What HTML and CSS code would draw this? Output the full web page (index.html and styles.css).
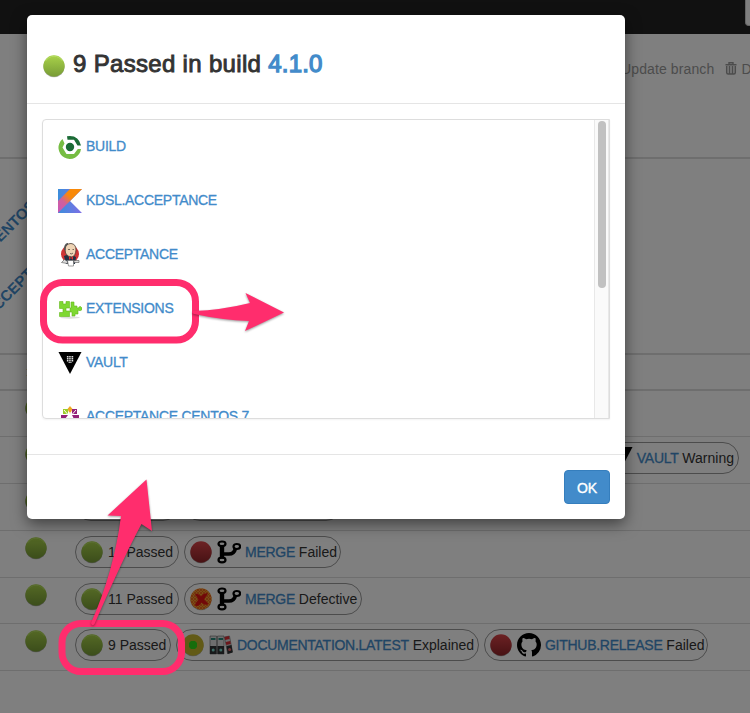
FILE: index.html
```html
<!DOCTYPE html>
<html lang="en">
<head>
<meta charset="utf-8">
<title>Branch validations</title>
<link rel="stylesheet" href="styles.css">
</head>
<body>
<svg width="0" height="0" class="defs" aria-hidden="true">
  <defs>
    <linearGradient id="gG" x2="0" y2="1"><stop stop-color="#a9d24a"/><stop offset="1" stop-color="#779b36"/></linearGradient>
    <linearGradient id="rG" x2="0" y2="1"><stop stop-color="#d94448"/><stop offset="1" stop-color="#8f2428"/></linearGradient>
    <linearGradient id="kO" x1="0" y1="1" x2="1" y2="0"><stop stop-color="#c757bc"/><stop offset=".35" stop-color="#d0609a"/><stop offset=".6" stop-color="#f88909"/><stop offset="1" stop-color="#f88909"/></linearGradient>
    <linearGradient id="kB" x2="1"><stop stop-color="#3b8edb"/><stop offset="1" stop-color="#7f6ee6"/></linearGradient>
    <pattern id="mesh" width="3" height="3" patternUnits="userSpaceOnUse"><rect width="3" height="3" fill="#f0a02c"/><path d="M0 0l3 3M3 0l-3 3" stroke="#ea5a1c" stroke-width=".8"/></pattern>
    <symbol id="ok" viewBox="0 0 24 24"><circle cx="12" cy="12.7" r="10.6" fill="#000" opacity=".3"/><circle cx="12" cy="12" r="10.7" fill="url(#gG)"/><path d="M3.500 7A10 10 0 0 1 20.500 7" fill="none" stroke="#b5dd62" stroke-width="1"/></symbol>
    <symbol id="fail" viewBox="0 0 24 24"><circle cx="12" cy="12.700" r="10.600" fill="#000" opacity=".3"/><circle cx="12" cy="12" r="10.700" fill="url(#rG)"/></symbol>
    <symbol id="defect" viewBox="0 0 24 24"><circle cx="12" cy="12.700" r="10.600" fill="#000" opacity=".3"/><circle cx="12" cy="12" r="10.700" fill="url(#mesh)"/><path d="M6 7q3.500-1 6 2.500Q15 5.500 19 6.500q-2 2.500-4 6l4.500 4.500q-3.500 2-7-1.500-2.500 4.500-6.500 3 .5-3 3.500-6Z" fill="#e31212"/></symbol>
    <symbol id="explain" viewBox="0 0 24 24"><circle cx="12" cy="12.700" r="10.600" fill="#000" opacity=".3"/><circle cx="12" cy="12" r="10.700" fill="#c4b52c"/><path d="M10 8h4l2 2v4l-2 2h-4l-2-2v-4z" fill="#2cda18"/></symbol>
    <symbol id="branch" viewBox="0 0 24 24"><g fill="none" stroke="#000"><ellipse cx="5" cy="3.800" rx="3.500" ry="2.300" stroke-width="2.200"/><ellipse cx="5" cy="20" rx="3.500" ry="2.300" stroke-width="2.200"/><ellipse cx="19.800" cy="6.500" rx="3.300" ry="2.500" stroke-width="2.200"/><path d="M5 5.500v13" stroke-width="4.400"/><path d="M5 14h6q6 .5 7.500-5.500" stroke-width="3.600"/></g></symbol>
    <symbol id="vault" viewBox="0 0 24 24"><path d="M.5 1h23L12 23z" fill="#000"/><path d="M9.500 5v6M11.200 5v7.500M12.900 5v7.500M14.600 5v6" stroke="#ddd" stroke-width="1.200" stroke-dasharray="1.400 .5"/></symbol>
    <symbol id="github" viewBox="0 0 16 16"><path fill="#000" d="M8 0C3.580 0 0 3.580 0 8c0 3.540 2.290 6.530 5.470 7.590.4.070.55-.17.55-.38 0-.19-.01-.82-.01-1.490-2.010.37-2.530-.49-2.690-.94-.09-.23-.48-.94-.82-1.130-.28-.15-.68-.52-.01-.53.63-.01 1.080.58 1.230.82.720 1.210 1.870.87 2.330.66.070-.52.280-.87.510-1.070-1.780-.2-3.640-.89-3.640-3.950 0-.87.310-1.590.82-2.150-.08-.2-.36-1.020.080-2.120 0 0 .67-.21 2.200.82a7.600 7.600 0 0 1 4 0c1.530-1.040 2.200-.82 2.200-.82.440 1.100.16 1.920.08 2.120.51.560.82 1.270.82 2.150 0 3.070-1.870 3.750-3.650 3.950.29.250.54.730.54 1.480 0 1.070-.01 1.930-.01 2.200 0 .21.150.46.550.38A8.010 8.010 0 0 0 16 8c0-4.420-3.580-8-8-8z"/></symbol>
    <symbol id="binders" viewBox="0 0 24 24"><rect y="2.500" width="24" height="19" fill="#fff" opacity=".1"/><g stroke="#444" stroke-width=".5"><path d="M1 3h6.500v18H1zM8.500 3H15v18H8.500z" fill="#ddd"/><path d="M15.500 4l5-1 3 16-5 1.500z" fill="#ddd"/></g><path d="M1 13h6.500v8H1zM8.500 13H15v8H8.500zM17.500 13l5-1 1.200 7.500-5 1.500z" fill="#303234"/><path d="M2 5h4.500v2H2zM9.500 5H14v2H9.500z" fill="#258779"/><path d="M15.500 4l4.500-1 .6 3-4.500 1zM16.700 9l4.500-1 .6 3-4.500 1z" fill="#d62c35"/><circle cx="4.200" cy="17" r="1.500" fill="#7fd8cc"/><circle cx="11.800" cy="17" r="1.500" fill="#7fd8cc"/><circle cx="20.600" cy="16.500" r="1.500" fill="#e46668"/></symbol>
  </defs>
</svg>

<div class="page">
  <header class="navbar"><span class="search"></span></header>
  <nav class="tools">
    <span>Update branch</span>
    <span class="delete"><svg width="12" height="13" viewBox="0 0 12 13"><path d="M4 2V.8h4V2M.5 2.700h11" fill="none" stroke="currentColor" stroke-width="1.400"/><path d="M1.700 4v6.500q0 1.500 1.500 1.500h5.600q1.500 0 1.500-1.500V4M4.500 4v7.500M7.500 4v7.500" fill="none" stroke="currentColor" stroke-width="1.500"/></svg>Delete</span>
  </nav>
  <section class="heads">
    <span class="slant slant-a">ACCEPTANCE CENTOS 7</span>
    <span class="slant slant-b">KDSL.ACCEPTANCE</span>
  </section>
  <div class="row filters"><svg class="state" viewBox="0 0 24 24"><path d="M12 2l1.500 6L18 4l-2 5.500 6-.5-5 3.500 5 3.500-6-.5 2 5.500-4.500-4L12 23l-1.500-6L6 21l2-5.500-6 .5 5-3.500L2 9l6 .5L6 4l4.500 4z" fill="#e5b000"/></svg></div>
  <div class="row short"><svg class="state"><use href="#ok"/></svg></div>
  <div class="row"><svg class="state"><use href="#ok"/></svg>
    <div class="pills pills-end"><span class="pill"><svg><use href="#fail"/></svg><svg><use href="#vault"/></svg><span><a>VAULT</a> Warning</span></span></div></div>
  <div class="row"><svg class="state"><use href="#ok"/></svg>
    <div class="pills"><span class="pill"><svg><use href="#ok"/></svg><span>12 Passed</span></span><span class="pill"><svg><use href="#fail"/></svg><svg><use href="#branch"/></svg><span><a>MERGE</a> Failed</span></span></div></div>
  <div class="row"><svg class="state"><use href="#ok"/></svg>
    <div class="pills"><span class="pill w104"><svg><use href="#ok"/></svg><span>11 Passed</span></span><span class="pill w157"><svg><use href="#fail"/></svg><svg><use href="#branch"/></svg><span><a>MERGE</a> Failed</span></span></div></div>
  <div class="row short"><svg class="state"><use href="#ok"/></svg>
    <div class="pills"><span class="pill w104"><svg><use href="#ok"/></svg><span>11 Passed</span></span><span class="pill w178"><svg><use href="#defect"/></svg><svg><use href="#branch"/></svg><span><a>MERGE</a> Defective</span></span></div></div>
  <div class="row"><svg class="state"><use href="#ok"/></svg>
    <div class="pills"><span class="pill w96"><svg><use href="#ok"/></svg><span>9 Passed</span></span><span class="pill w303"><svg><use href="#explain"/></svg><svg><use href="#binders"/></svg><span><a>DOCUMENTATION.LATEST</a> Explained</span></span><span class="pill w224"><svg><use href="#fail"/></svg><svg><use href="#github"/></svg><span><a>GITHUB.RELEASE</a> Failed</span></span></div></div>
</div>
<div class="backdrop"></div>

<div class="modal">
  <div class="modal-head"><svg><use href="#ok"/></svg><h3>9 Passed in build <a>4.1.0</a></h3></div>
  <div class="modal-body">
    <div class="list">
      <div class="items">
        <div class="item"><svg viewBox="0 0 24 24"><circle cx="12" cy="12" r="4.200" fill="#1b6b36"/><path d="M4.500 4A11.300 11.300 0 1 0 23 14H19.800L16 19H8.500L4.500 12.500 6.500 8.500z" fill="#76bd43"/><path d="M9 1.200Q20.500-.5 23 10.500H19.500L16 4.800H9.500z" fill="#1b6b36"/></svg><a>BUILD</a></div>
        <div class="item"><svg viewBox="0 0 24 24"><path d="M0 0h24L12 12l12 12H0z" fill="url(#kB)"/><path d="M12 0h12L0 24V12z" fill="url(#kO)"/></svg><a>KDSL.ACCEPTANCE</a></div>
        <div class="item"><svg viewBox="0 0 24 24"><circle cx="12" cy="11" r="9" fill="#cf3434"/><path d="M6 13q6-3 12 1l-1 7H8z" fill="#223043"/><path d="M7 6q1-5.500 6-5.500 5 .5 5 6.500-.5 6-4 7-5 0-6.500-4z" fill="#efd4b5" stroke="#463a31" stroke-width=".8"/><path d="M7 7q-1-5 3-6.500" fill="none" stroke="#555" stroke-width="1.500"/><path d="M10 6.500h2M14.500 6.500h1.500M12 10.500q2 1 3-.5" stroke="#463a31" stroke-width=".7" fill="none"/><path d="M11 13l2 2-2 2zM15 13l-2 2 2 2z" fill="#d33"/><path d="M9.500 17.500h6V23h-5z" fill="#fff" stroke="#777" stroke-width=".7"/><path d="M3.500 19.500l3-3 3 2v2zM16 17.500h5v2h-5z" fill="#ddd" stroke="#555" stroke-width=".6"/></svg><a>ACCEPTANCE</a></div>
        <div class="item"><svg viewBox="0 0 24 24"><ellipse cx="12" cy="20.500" rx="10" ry="1.200" fill="#ddd"/><path d="M1.500 4.500H5V7h3V4.500h3.500V11H8v3h3.500v5.500H1.500v-4H5v-4H1.500zM13 5h3v4h3v2h1.500q0-1.500 2-1.500 1.800 1 1.500 3-1 1.500-3 1L20 13v4h-3v2h-3v-4h-2v-4h1z" fill="#7ed832" stroke="#62b817" stroke-width=".6"/></svg><a>EXTENSIONS</a></div>
        <div class="item"><svg><use href="#vault"/></svg><a>VAULT</a></div>
        <div class="item"><svg viewBox="0 0 24 24"><path d="M12 1l2.500 3-2.500 5-2.500-5z" fill="#efa724"/><path d="M5 4h5v5H5z" fill="#9ccd2a"/><path d="M14 4h5v5h-5z" fill="#932279"/><path d="M3 10h7l-3 4H3zM14 10h7v4h-5z" fill="#932279"/><path d="M12 7v6M6 5l7 8M18 5l-7 8" stroke="#fff" stroke-width="1"/></svg><a>ACCEPTANCE.CENTOS.7</a></div>
      </div>
      <div class="track"><div class="thumb"></div></div>
    </div>
  </div>
  <div class="modal-foot"><button>OK</button></div>
</div>

<svg class="marks" width="750" height="713" viewBox="0 0 750 713">
  <g fill="none" stroke="#ff2d6d" stroke-width="7">
    <rect x="43.500" y="282.500" width="152" height="57.500" rx="19"/>
    <rect x="62" y="623.500" width="119.500" height="48" rx="19"/>
  </g>
  <g class="arrows" fill="#ff2d6d">
    <path d="M193 311Q222 310 250 303L245.500 293 284 312.500 245 331 249 321Q222 320 194 314Q191 312.500 193 311z"/>
    <path d="M91 623Q114 571 121 516L107.500 515.500 146.500 479.500 152 531 141.500 524Q124 556 94.500 624Q92 627 91 623z"/>
  </g>
</svg>
</body>
</html>
```

FILE: styles.css
```css
* { box-sizing: border-box; }
body { margin: 0; width: 750px; height: 713px; overflow: hidden; position: relative; background: #fff; color: #333; font: 14px/20px "Liberation Sans", Arial, sans-serif; }
a { color: #428bca; letter-spacing: -.28px; -webkit-text-stroke: .3px currentColor; }
svg { flex: none; display: block; }
.defs { position: absolute; }

.page { height: 713px; overflow: hidden; }
.navbar { height: 34px; background: #222; display: flex; justify-content: flex-end; }
.search { width: 5px; height: 26px; background: #fff; border: 1px solid #ccc; border-width: 0 0 1px 1px; border-radius: 0 0 0 4px; }
.tools { height: 125px; padding: 25px 0 0 621px; display: flex; gap: 11px; color: #999; white-space: nowrap; border-bottom: 2px solid #ddd; letter-spacing: .12px; }
.delete { display: flex; gap: 4px; }
.delete svg { margin-top: 3px; }
.heads { height: 196px; position: relative; border-bottom: 2px solid #ddd; overflow: hidden; }
.slant { position: absolute; color: #428bca; font-weight: bold; transform: rotate(-45deg); transform-origin: 100% 50%; white-space: nowrap; font-size: 15px; }
.slant-a { right: 708px; top: 25px; }
.slant-b { right: 690px; top: 73px; }
.row { height: 47px; display: flex; padding: 5px 0 0 24px; gap: 27px; border-bottom: 1px solid #ddd; }
.row.filters { height: 36px; border-bottom-width: 2px; }
.row.short { height: 46px; }
.state { width: 24px; height: 24px; }
.pills { display: flex; gap: 5px; }
.pills-end { flex: 1; justify-content: flex-end; padding-right: 11px; }
.pill { height: 32px; padding: 0 4px; border: 1px solid #999; border-radius: 16px; display: flex; align-items: center; gap: 4px; white-space: nowrap; }
.pill svg { width: 24px; height: 24px; }
.pill > span { line-height: 30px; height: 31px; }
.w96 { width: 96px; } .w104 { width: 104px; } .w157 { width: 157px; }
.w178 { width: 178px; } .w224 { width: 224px; } .w303 { width: 303px; }

.backdrop { position: absolute; inset: 0; background: rgba(0, 0, 0, .5); }

.modal { position: absolute; left: 27px; top: 15px; width: 598px; height: 504px; background: #fff; border-radius: 5px; box-shadow: 0 5px 15px rgba(0, 0, 0, .5); }
.modal-head { height: 89px; padding: 34px 15px 0; border-bottom: 1px solid #e5e5e5; display: flex; gap: 7px; }
.modal-head svg { width: 24px; height: 24px; margin-top: 5px; }
h3 { margin: 0; font-size: 24px; font-weight: 400; line-height: 30px; letter-spacing: .32px; -webkit-text-stroke: .9px currentColor; }
h3 a { letter-spacing: .2px; -webkit-text-stroke: 1.3px currentColor; }
.modal-body { height: 350px; padding: 15px; }
.list { height: 300px; display: flex; border: 1px solid #ddd; border-radius: 4px 0 0 4px; box-shadow: 0 1px 2px rgba(0, 0, 0, .05); overflow: hidden; }
.items { flex: 1; padding: 0 15px; }
.item { height: 54px; padding-top: 15px; display: flex; gap: 4px; }
.item svg { width: 24px; height: 24px; }
.item a { line-height: 22px; }
.track { width: 15px; background: #fafafa; border: 1px solid #e8e8e8; border-width: 0 1px; padding: 1px 2px 0 3px; }
.thumb { width: 8px; height: 167px; border-radius: 4px; background: #c1c1c1; }
.modal-foot { border-top: 1px solid #e5e5e5; padding: 15px; display: flex; justify-content: flex-end; }
button { width: 46px; height: 34px; padding: 0; border: 1px solid #357ebd; border-radius: 4px; background: #428bca; color: #fff; font: 14px/34px "Liberation Sans", Arial, sans-serif; -webkit-text-stroke: .4px currentColor; }

.marks { position: absolute; left: 0; top: 0; }
.arrows { filter: drop-shadow(0 1px 1px rgba(0, 0, 0, .4)); }
```
